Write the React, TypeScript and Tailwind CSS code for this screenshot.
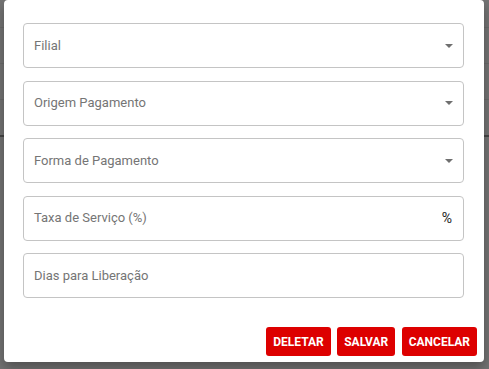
const fields = [
  { label: "Filial", kind: "select" },
  { label: "Origem Pagamento", kind: "select" },
  { label: "Forma de Pagamento", kind: "select" },
  { label: "Taxa de Serviço (%)", kind: "percent" },
  { label: "Dias para Liberação", kind: "text" },
];

function ArrowDrop() {
  return (
    <svg width="8" height="4" viewBox="0 0 8 4" className="shrink-0">
      <path d="M0 0h8L4 4z" fill="#6f6f6f" />
    </svg>
  );
}

function Field({ label, kind }: { label: string; kind: string }) {
  return (
    <div className="h-[45px] flex items-center justify-between rounded-[4px] border border-[#c4c4c4] pl-[10px] pr-[10px]">
      <span className="text-[13px] text-[#757575]">{label}</span>
      {kind === "select" && <ArrowDrop />}
      {kind === "percent" && <span className="text-[14px] text-[#222] pr-[1px]">%</span>}
    </div>
  );
}

export default function App() {
  return (
    <div
      className="relative w-[489px] h-[369px] overflow-hidden bg-white"
      style={{ fontFamily: "Roboto, 'Liberation Sans', sans-serif" }}
    >
      {/* page behind the overlay */}
      <div className="flex flex-col pt-[27px]">
        <div className="h-[36px] border-t border-[#ececec]" />
        <div className="h-[36px] border-t border-[#ececec]" />
        <div className="h-[36px] border-t border-[#ececec]" />
        <div className="h-[36px] border-t-2 border-[#9a9a9a]" />
      </div>
      <div className="absolute inset-0 bg-black/55" />

      {/* dialog */}
      <div className="absolute left-[4px] top-0 w-[480px] h-[362px] rounded-[4px] bg-white shadow-[0_6px_12px_rgba(0,0,0,0.3)] flex flex-col">
        <div className="flex flex-col gap-[12.5px] pt-[23px] pl-[19px] pr-[20px]">
          {fields.map((f) => (
            <Field key={f.label} label={f.label} kind={f.kind} />
          ))}
        </div>
        <div className="mt-auto flex justify-end gap-[6.5px] pr-[7px] pb-[6px]">
          <button className="h-[29px] px-[7px] rounded-[3px] bg-[#dd0000] text-white text-[12px] font-bold">
            DELETAR
          </button>
          <button className="h-[29px] px-[7px] rounded-[3px] bg-[#dd0000] text-white text-[12px] font-bold">
            SALVAR
          </button>
          <button className="h-[29px] px-[7px] rounded-[3px] bg-[#dd0000] text-white text-[12px] font-bold">
            CANCELAR
          </button>
        </div>
      </div>
    </div>
  );
}
